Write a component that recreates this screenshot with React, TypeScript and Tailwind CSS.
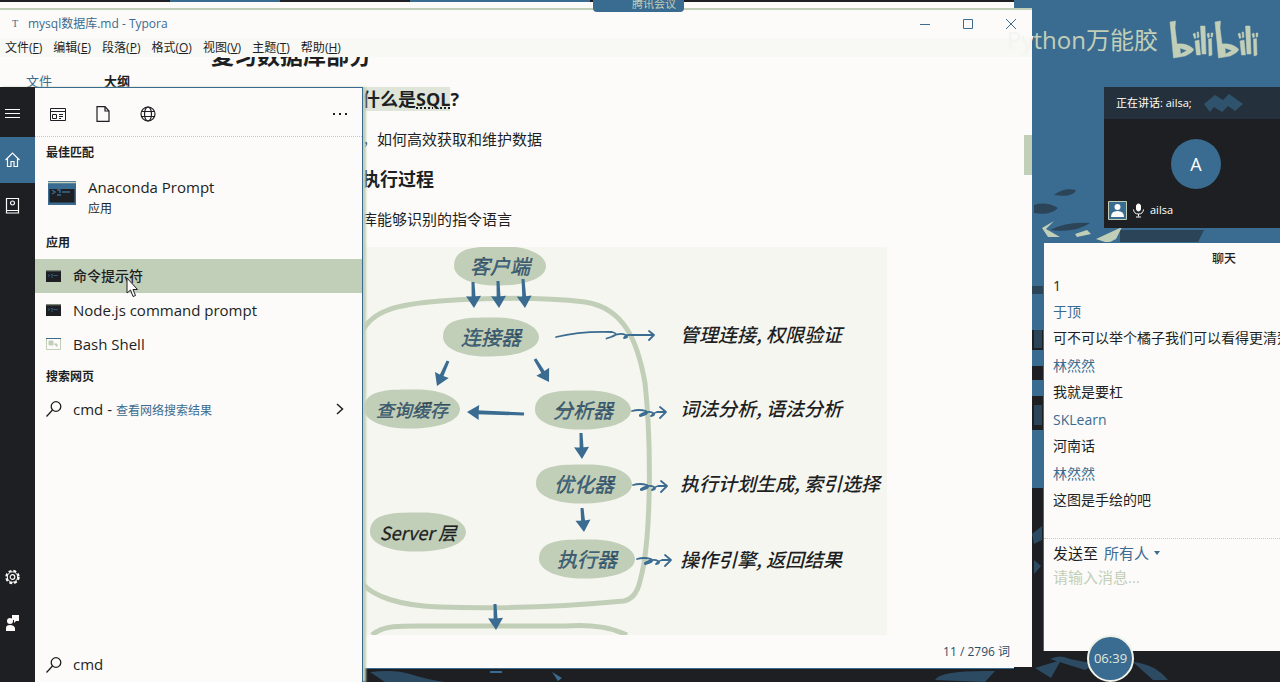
import { useState } from 'react';

const WHITE = '#fcfbf9';
const BLUE = '#3a6b90';
const DARK = '#1d1f23';
const SAGE = '#c2cfb8';

const menus = [
  ['文件', 'F'],
  ['编辑', 'E'],
  ['段落', 'P'],
  ['格式', 'O'],
  ['视图', 'V'],
  ['主题', 'T'],
  ['帮助', 'H'],
];

const messages = [
  { name: '于顶', text: '可不可以举个橘子我们可以看得更清楚' },
  { name: '林然然', text: '我就是要杠' },
  { name: 'SKLearn', text: '河南话' },
  { name: '林然然', text: '这图是手绘的吧' },
];

function Wallpaper() {
  return (
    <svg className="absolute inset-0 h-full w-full" viewBox="0 0 1280 682" preserveAspectRatio="none" aria-hidden="true">
      <rect width="1280" height="682" fill={DARK} />
      <path d="M170 0H280V3H170zM410 0H590V3H410zM1014 0H1280V245H1032V10H1014z" fill={BLUE} />
      <path d="M1032 228H1045V330H1032zM1032 350H1044V366H1032zM1032 380H1044V396H1032zM1032 430H1044V488H1032z" fill={BLUE} />
      <path d="M1032 286h12v8h-12zM1034 330h8v18h-8zM1034 405h8v20h-8z" fill="#2b4457" />
      <path d="M1054 195q10-8 22-5q-3 8-22 5zM1034 205q12-4 24 3q-8 8-24 5zM1050 230q18-9 40-7q-14 10-40 7zM1120 230h84l-6 12h-78z" fill="#2b4457" />
      <path d="M1042 228l12-7-8 8 14 8h-12zM1075 234l12-4 4 4-14 3zM1096 239l26-12-6 12-8 4z" fill={SAGE} />
      <path d="M1032 534l10-8v14l-8 4zM1034 560l7 6-7 8zM370 672q25-3 40 2t35 8h-60zM935 680q5-10 60-9l-10 11zM1050 659q10-5 20 0l25 5-10 6zM1133 662q22 2 35 18h-15zM1035 668l26-8-10 18z" fill="#2c4b63" />
      <path d="M552 672l10 6-4 3zM490 671h12v2h-12z" fill={BLUE} />
    </svg>
  );
}

type BubbleProps = { x: number; y: number; w?: number; label: string; dark?: boolean; small?: boolean };

function Bubble({ x, y, w = 96, label, dark, small }: BubbleProps) {
  const h = 39;
  return (
    <g transform={`translate(${x} ${y})`}>
      <path
        d={`M${-w / 2} 0C${-w / 2} ${-h / 2} ${-w / 4} ${-h / 2} 0 ${-h / 2}C${w / 3} ${-h / 2 - 1} ${w / 2} ${-h / 4} ${w / 2} 0C${w / 2} ${h / 3} ${w / 4} ${h / 2} 0 ${h / 2}C${-w / 4} ${h / 2 + 1} ${-w / 2} ${h / 3} ${-w / 2} 0Z`}
        fill={SAGE}
      />
      <text
        textAnchor="middle"
        y="8"
        className={small ? 'text-[18px] italic' : 'text-[20px] italic'}
        fill={dark ? DARK : BLUE}
        stroke={DARK}
        strokeWidth="0.3"
      >
        {label}
      </text>
    </g>
  );
}

function Arrow({ x1, y1, x2, y2 }: { x1: number; y1: number; x2: number; y2: number }) {
  const angle = (Math.atan2(y2 - y1, x2 - x1) * 180) / Math.PI;
  const length = Math.hypot(x2 - x1, y2 - y1);
  return (
    <g transform={`translate(${x1} ${y1}) rotate(${angle})`} fill={BLUE}>
      <path d={`M0 -1.5L${length - 9} -2V2L0 1.5Z`} />
      <path d={`M${length - 12} -7.5L${length} 0L${length - 12} 7.5Q${length - 11} 0 ${length - 12} -7.5Z`} />
    </g>
  );
}

function Squiggle({ x, y }: { x: number; y: number }) {
  return (
    <path
      transform={`translate(${x} ${y})`}
      d="M0 0q7-2 14 0q3 2-2 4t-4 0q8-5 13-2q3 2-2 3q2-3 6-4h8m-5-5l6 5-6 6"
      fill="none"
      stroke={BLUE}
      strokeWidth="1.8"
      strokeLinecap="round"
      strokeLinejoin="round"
    />
  );
}

function Diagram() {
  return (
    <svg
      className="block h-[388px] w-[525px]"
      viewBox="362 249 525 388"
      role="img"
      aria-label="SQL 执行过程"
      fontFamily="'Noto Sans CJK SC', sans-serif"
    >
      <rect x="362" y="249" width="525" height="388" fill="#f6f6f1" />
      <g fill="none" stroke={SAGE} strokeWidth="5">
        <path d="M362 334C372 312 400 306 440 303C500 299 550 300 585 304C625 310 638 345 645 385C651 440 651 520 644 565C640 585 638 600 624 603C570 608 500 611 440 609C400 608 372 598 362 585" />
        <path d="M372 637C385 626 405 628 440 628H565C595 626 612 630 627 637" />
      </g>
      <Bubble x={500} y={268} w={92} label="客户端" />
      <Bubble x={491} y={339} label="连接器" />
      <Bubble x={412} y={411} label="查询缓存" small />
      <Bubble x={583} y={412} label="分析器" />
      <Bubble x={584} y={486} label="优化器" />
      <Bubble x={587} y={561} label="执行器" />
      <Bubble x={418} y={534} label="Server 层" dark small />
      <Arrow x1={473} y1={284} x2={474} y2={310} />
      <Arrow x1={498} y1={283} x2={499} y2={310} />
      <Arrow x1={523} y1={281} x2={525} y2={310} />
      <Arrow x1={448} y1={363} x2={437} y2={388} />
      <Arrow x1={535} y1={361} x2={549} y2={384} />
      <Arrow x1={524} y1={416} x2={467} y2={414} />
      <Arrow x1={581} y1={435} x2={582} y2={461} />
      <Arrow x1={582} y1={510} x2={584} y2={534} />
      <Arrow x1={495} y1={606} x2={496} y2={632} />
      <path
        d="M556 339Q580 333 612 334q8 2-1 5t0 0q8-5 15-2q3 3-2 3q2-4 8-3h22m-5-4l5 4-5 5"
        fill="none"
        stroke={BLUE}
        strokeWidth="1.8"
        strokeLinecap="round"
        strokeLinejoin="round"
      />
      <Squiggle x={632} y={413} />
      <Squiggle x={633} y={487} />
      <Squiggle x={637} y={561} />
      <g className="text-[19px] italic" fill={DARK} fontWeight="500">
        <text x="680" y="344">管理连接, 权限验证</text>
        <text x="680" y="418">词法分析, 语法分析</text>
        <text x="680" y="493">执行计划生成, 索引选择</text>
        <text x="680" y="569">操作引擎, 返回结果</text>
      </g>
    </svg>
  );
}

function EditorWindow() {
  return (
    <main className="absolute bottom-[15px] left-0 right-[248px] top-2 flex flex-col overflow-hidden border-t-2 border-[#c2cfb8] bg-[#fcfbf9]">
      <header className="flex h-7 shrink-0 items-center text-xs text-[#3a6b90]">
        <span className="w-7 pl-3 font-['Liberation_Serif'] text-[10px]">T</span>
        <h1 className="grow">mysql数据库.md - Typora</h1>
        <button aria-label="最小化" className="flex h-full w-[43px] items-center justify-center">
          <svg width="10" height="10" fill="none" stroke={BLUE}><path d="M0 5.5H10" /></svg>
        </button>
        <button aria-label="最大化" className="flex h-full w-[43px] items-center justify-center">
          <svg width="10" height="10" fill="none" stroke={BLUE}><path d="M.5.5H9.5V9.5H.5z" /></svg>
        </button>
        <button aria-label="关闭" className="flex h-full w-[43px] items-center justify-center">
          <svg width="10" height="10" fill="none" stroke={BLUE}><path d="M0 0L10 10M10 0L0 10" /></svg>
        </button>
      </header>
      <nav className="flex h-[19px] shrink-0 items-center gap-[11px] bg-[#f8f8f5] pl-[5px] text-xs text-[#1d1f23]">
        {menus.map(([name, key]) => (
          <button key={key} className="whitespace-nowrap">
            {name}(<u>{key}</u>)
          </button>
        ))}
      </nav>
      <div className="flex min-h-0 grow overflow-hidden">
        <aside className="w-[211px] shrink-0 pt-3.5 text-[13px] leading-5 text-[#1d1f23]">
          <div className="flex gap-[52px] pl-[26px]">
            <button className="text-[#3a6b90]">文件</button>
            <button className="font-bold">大纲</button>
          </div>
        </aside>
        <article className="min-w-0 grow text-[#1d1f23]">
          <h2 className="-mt-[18px] text-[23px] font-bold leading-8">复习数据库部分</h2>
          <div className="pl-[151px]">
            <h3 className="mt-4 text-lg font-bold leading-6">
              <span className="bg-[#dfe5d9]">什么是<span className="underline decoration-dotted underline-offset-2">SQL</span></span>?
            </h3>
            <p className="mt-4 text-[15px] leading-6">，如何高效获取和维护数据</p>
            <h3 className="mt-4 text-lg font-bold leading-6">执行过程</h3>
            <p className="mb-4 mt-4 text-[15px] leading-6">库能够识别的指令语言</p>
            <Diagram />
          </div>
        </article>
        <div className="w-2 shrink-0 pt-[78px]">
          <div className="h-10 bg-[#c2cfb8]" />
        </div>
      </div>
      <footer className="flex h-[30px] shrink-0 items-center justify-end pr-[22px] text-xs text-[#2d4d66]">11 / 2796 词</footer>
    </main>
  );
}

function ConsoleIcon({ large }: { large?: boolean }) {
  return (
    <svg className={large ? 'h-6 w-7' : 'h-3 w-[15px]'} viewBox="0 0 28 24" preserveAspectRatio="none" aria-hidden="true">
      <rect width="28" height="24" fill={large ? BLUE : DARK} />
      <path d="M0 1.5H28" stroke={SAGE} strokeWidth="1.5" />
      <path d="M1.5 8H26.5V21.5H1.5z" fill={DARK} />
      <path d="M4 9l3 2-3 2M9 9h3v3M14 11h8M9 14h4" fill="none" stroke={BLUE} strokeWidth="1.5" />
    </svg>
  );
}

function SearchIcon() {
  return (
    <svg width="16" height="16" viewBox="0 0 16 16" fill="none" stroke={DARK} strokeWidth="1.3" aria-hidden="true">
      <circle cx="10" cy="5.5" r="4.8" />
      <path d="M6.5 9L.5 15.5" />
    </svg>
  );
}

function Rail() {
  const item = 'flex h-[46px] w-full items-center pl-[5px]';
  return (
    <nav className="flex w-[35px] shrink-0 flex-col bg-[#1d1f23] pb-9 pt-1">
      <button aria-label="菜单" className={item}>
        <svg width="16" height="12" stroke={WHITE}><path d="M0 1.5H15M0 5.5H15M0 9.5H15" /></svg>
      </button>
      <button aria-label="主页" className={`${item} bg-[#3a6b90]`}>
        <svg width="16" height="16" fill="none" stroke={WHITE} strokeWidth="1.2"><path d="M.5 8L7.5 1L14.5 8M2.5 6.5V14.5H6V9.5H9V14.5H12.5V6.5" /></svg>
      </button>
      <button aria-label="笔记本" className={item}>
        <svg width="15" height="16" fill="none" stroke={WHITE} strokeWidth="1.2"><path d="M1.5.5H13.5V15H1.5zM1.5 12.5H13.5" /><circle cx="7.5" cy="5" r="2" /></svg>
      </button>
      <button aria-label="设置" className={`${item} mt-auto`}>
        <svg width="16" height="16" viewBox="0 0 16 16" fill="none" stroke={WHITE}>
          <circle cx="7.5" cy="8" r="6.2" strokeWidth="2" strokeDasharray="2.9 2" />
          <circle cx="7.5" cy="8" r="5.2" />
          <circle cx="7.5" cy="8" r="2.3" strokeWidth="1.2" />
        </svg>
      </button>
      <button aria-label="反馈" className={item}>
        <svg width="15" height="16" fill={WHITE}><path d="M7 0H14V6H11L9 8V5H7z" /><circle cx="5" cy="6" r="3" /><path d="M1 16V13Q1 10 5 10T10 13V16z" /></svg>
      </button>
    </nav>
  );
}

function SearchPanel() {
  const [query, setQuery] = useState('cmd');
  return (
    <section className="absolute bottom-0 left-0 top-[87px] flex w-[363px] text-[#1d1f23] shadow-[3px_0_2px_#c2cfb8]">
      <Rail />
      <div className="flex min-w-0 grow flex-col border-r border-t border-[#3a6b90] bg-[#fcfbf9]">
        <div className="flex h-[49px] shrink-0 items-center gap-[30px] border-b border-dotted border-[#c2cfb8] pl-[15px] pr-[14px] pt-1">
          <button aria-label="应用">
            <svg className="block" width="16" height="14" fill="none" stroke={DARK}><path d="M.5 1.5H15.5V13.5H.5zM.5 4.5H15.5M2.5 7.5H6.5V11.5H2.5zM9 7.5H13M9 9.5H13M9 11.5H11" /></svg>
          </button>
          <button aria-label="文档">
            <svg className="block" width="14" height="16" fill="none" stroke={DARK} strokeWidth="1.2"><path d="M1 .6H9L13 5V15.4H1zM9 .6V5H13" /></svg>
          </button>
          <button aria-label="网页">
            <svg className="block" width="16" height="16" fill="none" stroke={DARK} strokeWidth="1.2"><circle cx="8" cy="8" r="7" /><ellipse cx="8" cy="8" rx="3.5" ry="7" /><path d="M1.5 5.5H14.5M1.5 10.5H14.5" /></svg>
          </button>
          <button aria-label="更多" className="ml-auto">
            <svg className="block" width="15" height="4" fill={DARK}><path d="M0 1h2v2H0zM6 1h2v2H6zM12 1h2v2h-2z" /></svg>
          </button>
        </div>
        <h2 className="pl-[11px] pt-1.5 text-xs font-bold leading-5">最佳匹配</h2>
        <button className="flex items-start gap-3 pb-2 pl-[13px] pt-3 text-left">
          <span className="pt-1.5"><ConsoleIcon large /></span>
          <span>
            <span className="block text-[15px] leading-6">Anaconda Prompt</span>
            <span className="block text-xs leading-5">应用</span>
          </span>
        </button>
        <h2 className="pl-[11px] pt-1 text-xs font-bold leading-6">应用</h2>
        <button className="mt-1 flex h-[34px] items-center gap-3 bg-[#c2cfb8] pl-[11px] text-sm font-medium">
          <ConsoleIcon />命令提示符
        </button>
        <button className="flex h-[34px] items-center gap-3 pl-[11px] text-[15px]">
          <ConsoleIcon />Node.js command prompt
        </button>
        <button className="flex h-[34px] items-center gap-3 pl-[11px] text-[15px]">
          <svg width="15" height="12" fill="none" stroke={SAGE}><path d="M.5.5H14.5V11.5H.5z" /><path d="M0 .5H15" stroke={BLUE} /><path d="M3 3h4v4H3zM8 6h3v3" fill={SAGE} /></svg>
          Bash Shell
        </button>
        <h2 className="pl-[11px] pt-1 text-xs font-bold leading-6">搜索网页</h2>
        <button className="mt-0.5 flex h-9 items-center gap-[11px] pl-[11px] pr-[18px] text-[15px]">
          <SearchIcon />
          <span>cmd - <span className="text-xs text-[#3a6b90]">查看网络搜索结果</span></span>
          <svg className="ml-auto" width="8" height="12" fill="none" stroke={DARK} strokeWidth="1.5"><path d="M1 1L6.5 6L1 11" /></svg>
        </button>
        <label className="mt-auto flex h-[35px] shrink-0 items-center gap-[11px] pl-[11px] text-[15px]">
          <SearchIcon />
          <input aria-label="搜索" value={query} onChange={(e) => setQuery(e.target.value)} className="min-w-0 grow bg-transparent outline-none" />
        </label>
      </div>
      <svg className="absolute left-[126px] top-[190px]" width="13" height="21" fill={WHITE} stroke={DARK} aria-hidden="true"><path d="M1 1V16L4.5 13L7 19.5L9.5 18.5L7 12.5H11.5z" /></svg>
    </section>
  );
}

function VideoPanel() {
  return (
    <section className="absolute right-0 top-[87px] flex h-[141px] w-44 flex-col bg-[#1d1f23] text-white">
      <header className="flex h-8 shrink-0 items-center gap-3 bg-[#24303b] pl-3 text-[11px]">
        正在讲话: ailsa;
        <svg width="40" height="20" fill="#30536d" aria-hidden="true"><path d="M0 11L11 2L19 7L25 1L39 11L31 18L24 13L18 19L10 14L6 19z" /></svg>
      </header>
      <div className="mx-auto mt-5 flex size-[50px] shrink-0 translate-x-1 items-center justify-center rounded-full bg-[#3a6b90] text-lg">A</div>
      <footer className="mt-auto flex items-center gap-1.5 pb-2 pl-1 text-[11px]">
        <svg width="19" height="19" aria-hidden="true"><path d="M.5.5H18.5V18.5H.5z" fill={BLUE} stroke={SAGE} /><circle cx="9.5" cy="6" r="3" fill={WHITE} /><path d="M3 16Q3 10 9.5 10T16 16z" fill={WHITE} /></svg>
        <svg width="11" height="15" fill="none" stroke={WHITE} aria-hidden="true"><rect x="3.5" y="1" width="4" height="7" rx="2" fill={WHITE} /><path d="M.5 6.5Q1 11 5.5 11T10.5 6.5M5.5 11V13.5M3 14H8" /></svg>
        ailsa
      </footer>
    </section>
  );
}

function ChatPanel() {
  const [draft, setDraft] = useState('');
  return (
    <section className="absolute bottom-[31px] right-0 top-[242px] flex w-[237px] flex-col overflow-hidden border-l border-t border-[#3a6b90] bg-[#fcfbf9] text-sm text-[#1d1f23]">
      <h2 className="pl-[168px] pt-1 text-xs font-medium leading-6">聊天</h2>
      <ul className="flex flex-col gap-0.5 pl-[9px] leading-[26px]">
        <li className="-mb-0.5 pt-0.5">1</li>
        {messages.map((m) => (
          <li key={m.text} className="whitespace-nowrap">
            <div className="text-[#3a6b90]">{m.name}</div>
            <div>{m.text}</div>
          </li>
        ))}
      </ul>
      <div className="mt-auto h-[113px] shrink-0 border-t border-dotted border-[#c2cfb8] pl-[9px] pt-0.5">
        <label className="flex items-center gap-1.5 text-[15px] leading-6">
          发送至
          <span className="flex items-center gap-1 text-[#3a6b90]">
            <select className="appearance-none bg-transparent outline-none">
              <option>所有人</option>
            </select>
            <svg width="6" height="4" fill={BLUE} aria-hidden="true"><path d="M0 0H6L3 4z" /></svg>
          </span>
        </label>
        <textarea
          aria-label="消息"
          rows={3}
          value={draft}
          onChange={(e) => setDraft(e.target.value)}
          placeholder="请输入消息..."
          className="block w-full resize-none bg-transparent text-[15px] leading-6 outline-none placeholder:text-[#c2cfb8]"
        />
      </div>
    </section>
  );
}

function LogoHalf() {
  return (
    <>
      <path
        fillRule="evenodd"
        d="M2 4L7.5 3L7 10L9 26Q19 25 25.500 31Q26 34 17 38L5.500 40L4 24zM12 30L12.500 36L19 32.500z"
      />
      <path d="M27 23L31 22L32.500 37L28.500 37zM32.500 8L37 8L38 36L34 36zM40.500 21L43.500 20.500L44 37L41 38zM25 16L27 15L28 20L26.500 20.500zM29 14L30.500 14L31 19L29.500 20zM39 16L41 15L41.500 19L40 20zM43 15L45 15L44.500 19L43 19z" />
    </>
  );
}

function Watermark() {
  return (
    <div className="pointer-events-none absolute right-[18px] top-[18px] flex items-center gap-2.5 text-2xl text-[#c2cfb8]">
      <span><span className="text-[#f4f5f0]">Py</span>thon万能胶</span>
      <svg width="94" height="44" viewBox="0 0 94 44" fill={SAGE} stroke={SAGE} strokeWidth="0.5" strokeLinejoin="round" role="img" aria-label="bilibili">
        <LogoHalf />
        <g transform="translate(45 0)"><LogoHalf /></g>
      </svg>
    </div>
  );
}

export default function App() {
  return (
    <div className="relative h-screen w-full overflow-hidden font-['Open_Sans','Noto_Sans_CJK_SC',sans-serif]">
      <Wallpaper />
      <div className="absolute bottom-[13px] left-0 right-[266px] top-0.5 border-b border-[#3a6b90] bg-[#fcfbf9]" />
      <EditorWindow />
      <SearchPanel />
      <div className="absolute left-[593px] top-0 flex h-3 w-[91px] items-end justify-end overflow-hidden rounded-b bg-[#3a6b90] pr-2 text-[11px] leading-4 text-[#c2cfb8]">腾讯会议</div>
      <VideoPanel />
      <ChatPanel />
      <Watermark />
      <div className="absolute bottom-0 right-[146px] flex size-[47px] items-center justify-center rounded-full border-2 border-[#f0f1e9] bg-[#3a6b90] text-[13px] text-[#e1e8dc]">06:39</div>
    </div>
  );
}
